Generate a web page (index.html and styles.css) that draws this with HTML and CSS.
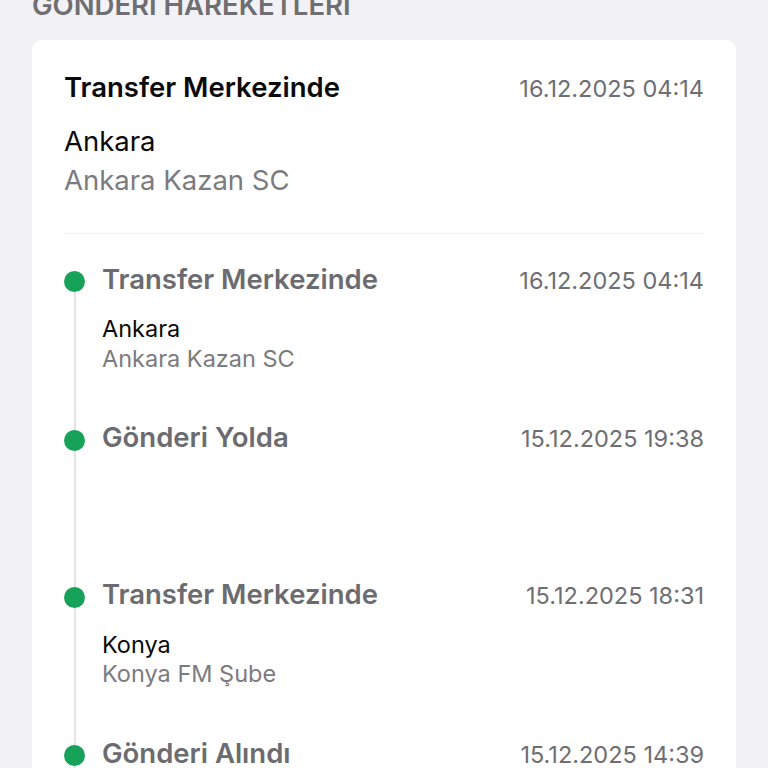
FILE: index.html
```html
<!DOCTYPE html>
<html lang="tr">
<head>
<meta charset="utf-8">
<title>Gönderi Hareketleri</title>
<link rel="stylesheet" href="styles.css">
</head>
<body>
<h2 class="section-title">GÖNDERİ HAREKETLERİ</h2>
<div class="card">
  <div class="summary">
    <div class="row">
      <span class="summary-status">Transfer Merkezinde</span>
      <span class="summary-date">16.12.2025 04:14</span>
    </div>
    <div class="summary-city">Ankara</div>
    <div class="summary-branch">Ankara Kazan SC</div>
  </div>
  <ul class="timeline">
    <li class="event">
      <div class="marker"><span class="dot"></span></div>
      <div class="event-body">
        <div class="row">
          <span class="event-status">Transfer Merkezinde</span>
          <span class="event-date">16.12.2025 04:14</span>
        </div>
        <div class="event-city">Ankara</div>
        <div class="event-branch">Ankara Kazan SC</div>
      </div>
    </li>
    <li class="event">
      <div class="marker"><span class="dot"></span></div>
      <div class="event-body">
        <div class="row">
          <span class="event-status">Gönderi Yolda</span>
          <span class="event-date">15.12.2025 19:38</span>
        </div>
      </div>
    </li>
    <li class="event">
      <div class="marker"><span class="dot"></span></div>
      <div class="event-body">
        <div class="row">
          <span class="event-status">Transfer Merkezinde</span>
          <span class="event-date">15.12.2025 18:31</span>
        </div>
        <div class="event-city">Konya</div>
        <div class="event-branch">Konya FM Şube</div>
      </div>
    </li>
    <li class="event">
      <div class="marker"><span class="dot"></span></div>
      <div class="event-body">
        <div class="row">
          <span class="event-status">Gönderi Alındı</span>
          <span class="event-date">15.12.2025 14:39</span>
        </div>
        <div class="event-city">Konya</div>
        <div class="event-branch">Konya FM Şube</div>
      </div>
    </li>
  </ul>
</div>
</body>
</html>
```
FILE: styles.css
```css
html, body {
  margin: 0;
  padding: 0;
  background: #f2f2f6;
  font-family: Inter, "Noto Sans", "Liberation Sans", sans-serif;
  overflow: hidden;
}

.section-title {
  margin: -11px 0 0 32px;
  font-size: 27.5px;
  line-height: 32px;
  font-weight: 600;
  color: #6e6e73;
}

.card {
  margin: 19px 32px 0 32px;
  background: #ffffff;
  border-radius: 9px;
  padding: 0 32px;
  box-shadow: 0 0 2px rgba(0, 0, 0, 0.03);
}

.row {
  display: flex;
  justify-content: space-between;
  align-items: baseline;
}

.summary {
  padding-top: 30.5px;
  padding-bottom: 33px;
  border-bottom: 1px solid #f0f0f2;
}

.summary-status {
  font-size: 27.5px;
  line-height: 32px;
  font-weight: 600;
  color: #0a0a0a;
}

.summary-date,
.event-date {
  font-size: 23.5px;
  line-height: 32px;
  color: #6e6e73;
}

.summary-city {
  margin-top: 17px;
  font-size: 27.5px;
  line-height: 39px;
  color: #0a0a0a;
}

.summary-branch {
  font-size: 27.5px;
  line-height: 39px;
  color: #7b7b80;
}

.timeline {
  list-style: none;
  margin: 0;
  padding: 29px 0 0 0;
}

.event {
  display: flex;
  gap: 17px;
  min-height: 157.3px;
  box-sizing: border-box;
}

.marker {
  flex: 0 0 20px;
  padding-top: 8.5px;
  display: flex;
  justify-content: center;
  background: linear-gradient(#e3e3e6, #e3e3e6) center bottom / 2px 100% no-repeat;
}

.event:first-child .marker {
  background-size: 2px calc(100% - 20px);
}

.dot {
  width: 21px;
  height: 21px;
  flex: 0 0 21px;
  border-radius: 50%;
  background: #17a25a;
}

.event-body {
  flex: 1;
  padding-bottom: 48px;
}

.event-status {
  font-size: 27.5px;
  line-height: 32px;
  font-weight: 600;
  color: #6b6b70;
}

.event-city {
  margin-top: 17.5px;
  font-size: 23.5px;
  line-height: 29.5px;
  color: #0a0a0a;
}

.event-branch {
  font-size: 23.5px;
  line-height: 29.5px;
  color: #7b7b80;
}
```
